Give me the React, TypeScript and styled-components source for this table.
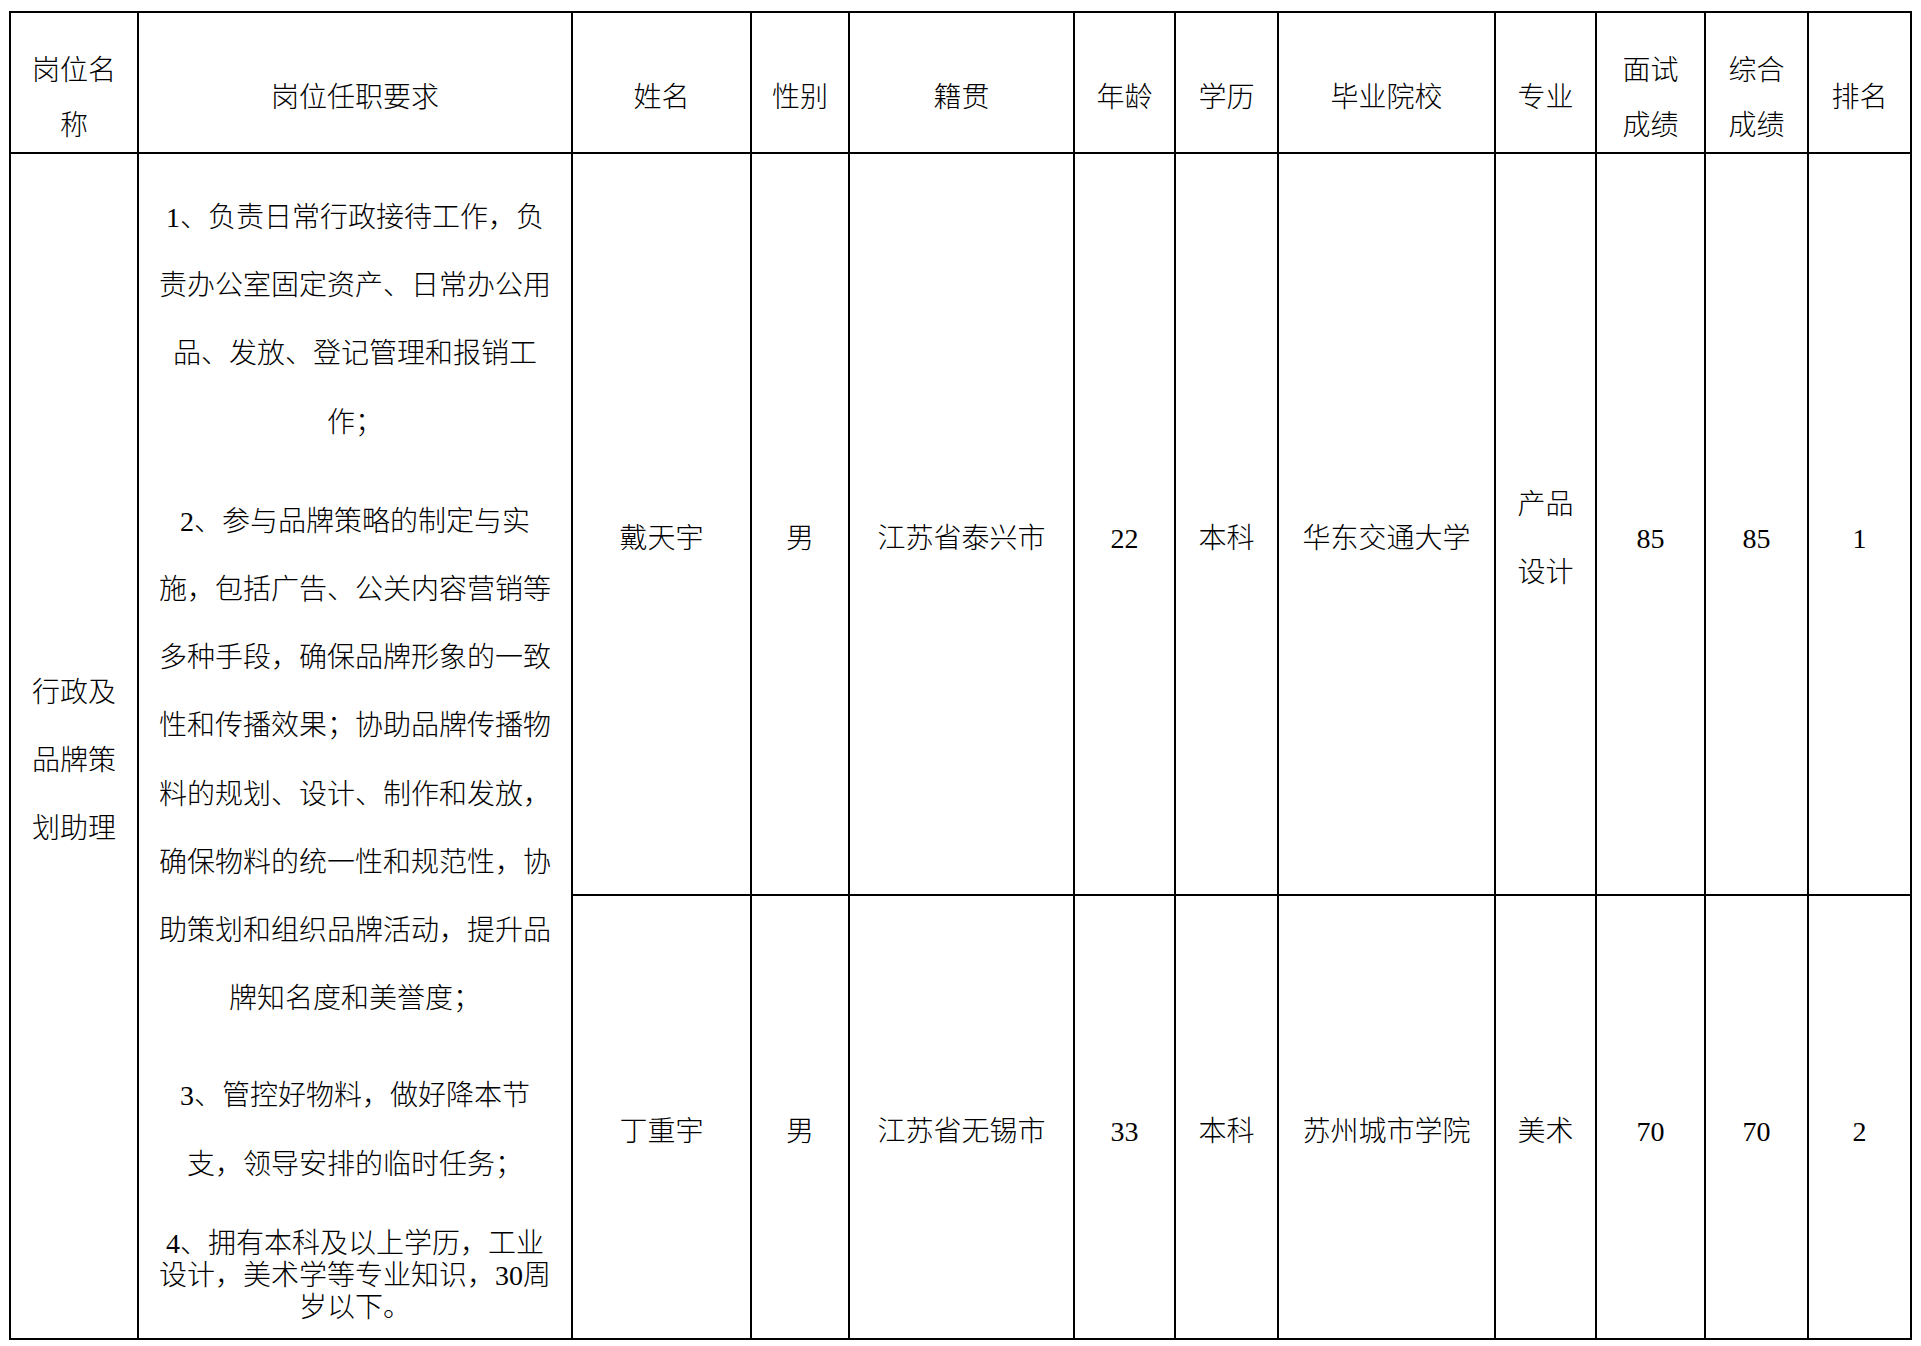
import React from "react";
import styled, { createGlobalStyle } from "styled-components";

const GlobalStyle = createGlobalStyle`
  html, body {
    margin: 0;
    padding: 0;
    background: #ffffff;
  }
  body {
    font-family: "Liberation Serif", "Noto Sans CJK SC", serif;
    color: #000000;
  }
`;

const Page = styled.div`
  padding: 11px 0 0 9px;
`;

const Sheet = styled.div`
  display: grid;
  width: max-content;
  grid-template-columns: 126px 432px 177px 96px 223px 99px 101px 215px 99px 107px 101px 101px;
  grid-template-rows: 139px 740px 442px;
  gap: 2px;
  padding: 2px;
  background: #000000;
`;

const Cell = styled.div<{ $span?: number; $lh?: number }>`
  background: #ffffff;
  grid-row: ${(p) => (p.$span ? `span ${p.$span}` : "auto")};
  display: flex;
  flex-direction: column;
  align-items: center;
  justify-content: center;
  box-sizing: border-box;
  padding: 30px 4px 0;
  font-family: "Liberation Serif", "Noto Sans CJK SC", serif;
  font-weight: 300;
  font-size: 28px;
  line-height: ${(p) => p.$lh ?? 68}px;
  text-align: center;
  color: #000000;
`;

const RequirementCell = styled(Cell)`
  justify-content: flex-start;
  padding-top: 30px;
`;

const Para = styled.div<{ $lh: number; $gap: number }>`
  line-height: ${(p) => p.$lh}px;
  margin-top: ${(p) => p.$gap}px;
`;

const Line = styled.span`
  display: block;
  white-space: nowrap;
`;

const Stack: React.FC<{ lines: string[] }> = ({ lines }) => (
  <>
    {lines.map((l, i) => (
      <Line key={i}>{l}</Line>
    ))}
  </>
);

const headers: { lines: string[] }[] = [
  { lines: ["岗位名", "称"] },
  { lines: ["岗位任职要求"] },
  { lines: ["姓名"] },
  { lines: ["性别"] },
  { lines: ["籍贯"] },
  { lines: ["年龄"] },
  { lines: ["学历"] },
  { lines: ["毕业院校"] },
  { lines: ["专业"] },
  { lines: ["面试", "成绩"] },
  { lines: ["综合", "成绩"] },
  { lines: ["排名"] },
];

const paragraphs: { lh: number; gap: number; lines: string[] }[] = [
  {
    lh: 68.2,
    gap: 0,
    lines: [
      "1、负责日常行政接待工作，负",
      "责办公室固定资产、日常办公用",
      "品、发放、登记管理和报销工",
      "作；",
    ],
  },
  {
    lh: 68.2,
    gap: 31,
    lines: [
      "2、参与品牌策略的制定与实",
      "施，包括广告、公关内容营销等",
      "多种手段，确保品牌形象的一致",
      "性和传播效果；协助品牌传播物",
      "料的规划、设计、制作和发放，",
      "确保物料的统一性和规范性，协",
      "助策划和组织品牌活动，提升品",
      "牌知名度和美誉度；",
    ],
  },
  {
    lh: 68.2,
    gap: 29,
    lines: ["3、管控好物料，做好降本节", "支，领导安排的临时任务；"],
  },
  {
    lh: 32,
    gap: 29,
    lines: ["4、拥有本科及以上学历，工业", "设计，美术学等专业知识，30周", "岁以下。"],
  },
];

const candidates: string[][][] = [
  [["戴天宇"], ["男"], ["江苏省泰兴市"], ["22"], ["本科"], ["华东交通大学"], ["产品", "设计"], ["85"], ["85"], ["1"]],
  [["丁重宇"], ["男"], ["江苏省无锡市"], ["33"], ["本科"], ["苏州城市学院"], ["美术"], ["70"], ["70"], ["2"]],
];

export default function App() {
  return (
    <>
      <GlobalStyle />
      <Page>
        <Sheet>
          {headers.map((h, i) => (
            <Cell key={`h${i}`} $lh={55}>
              <Stack lines={h.lines} />
            </Cell>
          ))}
          <Cell $span={2}>
            <Stack lines={["行政及", "品牌策", "划助理"]} />
          </Cell>
          <RequirementCell $span={2}>
            {paragraphs.map((p, i) => (
              <Para key={i} $lh={p.lh} $gap={p.gap}>
                <Stack lines={p.lines} />
              </Para>
            ))}
          </RequirementCell>
          {candidates.map((row, r) =>
            row.map((c, i) => (
              <Cell key={`r${r}c${i}`}>
                <Stack lines={c} />
              </Cell>
            ))
          )}
        </Sheet>
      </Page>
    </>
  );
}
